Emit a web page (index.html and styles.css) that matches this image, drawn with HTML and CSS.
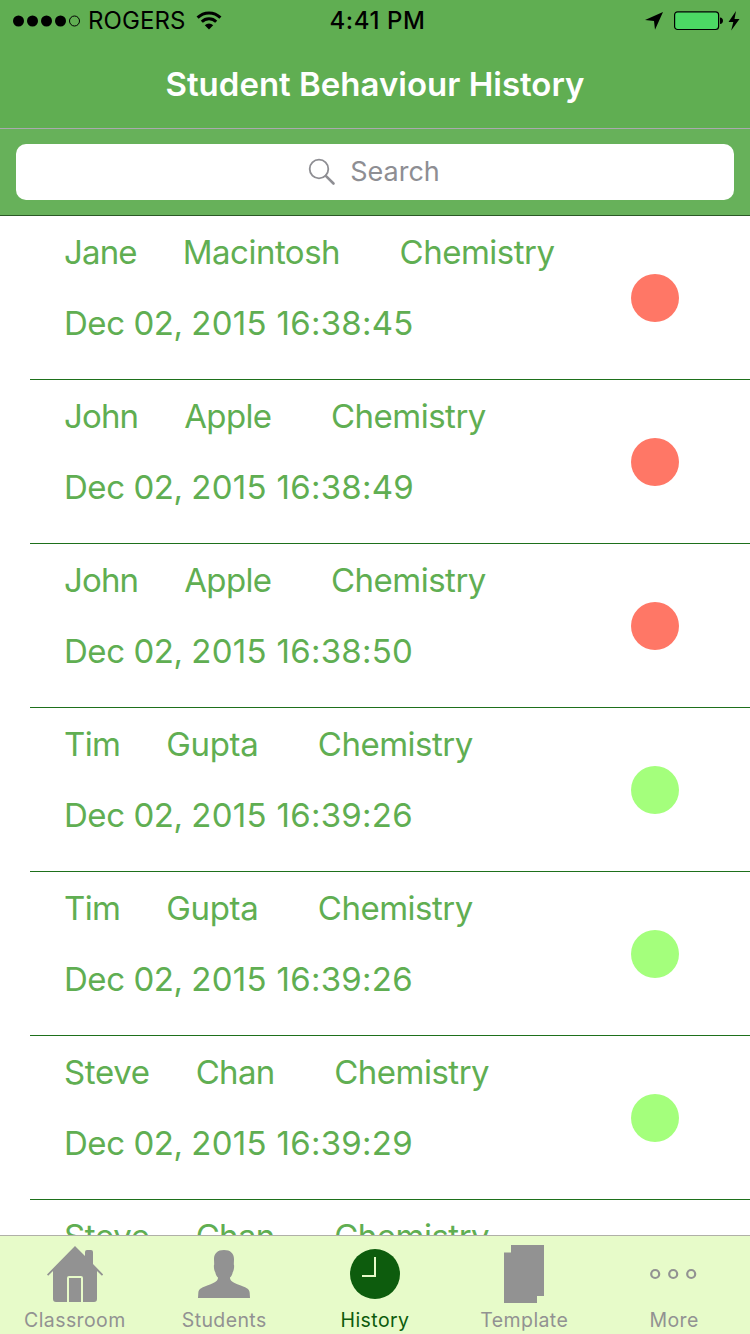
FILE: index.html
```html
<!DOCTYPE html>
<html lang="en">
<head>
<meta charset="utf-8">
<title>Student Behaviour History</title>
<link rel="stylesheet" href="styles.css">
</head>
<body>
<div class="screen">
  <header class="top">
    <div class="status">
      <div class="status-left">
        <svg class="signal" width="68" height="12" viewBox="0 0 68 12"><circle cx="5.5" cy="6" r="5.5"/><circle cx="19.5" cy="6" r="5.5"/><circle cx="33.5" cy="6" r="5.5"/><circle cx="47.5" cy="6" r="5.5"/><circle cx="61.5" cy="6" r="5" fill="none" stroke="#000"/></svg>
        <span class="carrier">ROGERS</span>
        <svg class="wifi" width="26" height="19" viewBox="0 0 26 19"><g fill="none" stroke="#000" stroke-width="3"><path d="M1.6 6.6a16.2 16.2 0 0 1 22.8 0"/><path d="M5.8 10.8a10.2 10.2 0 0 1 14.4 0"/></g><path d="M13 18.500l-4.200-4.200a6 6 0 0 1 8.400 0z"/></svg>
      </div>
      <span class="time">4:41 PM</span>
      <div class="status-right">
        <svg class="location" width="18" height="18" viewBox="0 0 18 18"><path d="M18 0L10 17.800 9 9 0 8z"/></svg>
        <svg class="battery" width="50" height="20" viewBox="0 0 50 20"><rect x=".6" y=".8" width="44" height="17.700" rx="3" fill="#4cd964" stroke="#000" stroke-width="1.200"/><path d="M46 6.500c1.800 0 3 1.400 3 3.200s-1.200 3.200-3 3.200z"/></svg>
        <svg class="bolt" width="12" height="20" viewBox="0 0 12 20"><path d="M8 0L.5 11h4.800L3.200 19.500 11.500 8H6.500z"/></svg>
      </div>
    </div>
    <h1 class="title"><span>Student Behaviour History</span></h1>
  </header>
  <div class="searchbar">
    <div class="field">
      <svg class="glass" width="28" height="28" viewBox="0 0 28 28" fill="none" stroke="#8e8e93"><circle cx="11" cy="11" r="9.300" stroke-width="1.800"/><path d="M17.800 17.800l7.700 7.700" stroke-width="2.600" stroke-linecap="round"/></svg>
      <span class="placeholder">Search</span>
    </div>
  </div>
  <main class="list">
    <article class="row"><div class="info"><div class="names"><span class="first tighter">Jane</span><span class="last snug">Macintosh</span><span class="course snug">Chemistry</span></div><div class="date"><span class="day">Dec 02, </span><span class="year">2015 </span><span class="clock">16:38:45</span></div></div><i class="dot red"></i></article>
    <article class="row"><div class="info"><div class="names"><span class="first tighter">John</span><span class="last tight">Apple</span><span class="course snug">Chemistry</span></div><div class="date"><span class="day">Dec 02, </span><span class="year">2015 </span><span class="clock">16:38:49</span></div></div><i class="dot red"></i></article>
    <article class="row"><div class="info"><div class="names"><span class="first tighter">John</span><span class="last tight">Apple</span><span class="course snug">Chemistry</span></div><div class="date"><span class="day">Dec 02, </span><span class="year">2015 </span><span class="clock">16:38:50</span></div></div><i class="dot red"></i></article>
    <article class="row"><div class="info"><div class="names"><span class="first tight">Tim</span><span class="last close">Gupta</span><span class="course snug">Chemistry</span></div><div class="date"><span class="day">Dec 02, </span><span class="year">2015 </span><span class="clock">16:39:26</span></div></div><i class="dot green"></i></article>
    <article class="row"><div class="info"><div class="names"><span class="first tight">Tim</span><span class="last close">Gupta</span><span class="course snug">Chemistry</span></div><div class="date"><span class="day">Dec 02, </span><span class="year">2015 </span><span class="clock">16:39:26</span></div></div><i class="dot green"></i></article>
    <article class="row"><div class="info"><div class="names"><span class="first close">Steve</span><span class="last tight">Chan</span><span class="course snug">Chemistry</span></div><div class="date"><span class="day">Dec 02, </span><span class="year">2015 </span><span class="clock">16:39:29</span></div></div><i class="dot green"></i></article>
    <article class="row"><div class="info"><div class="names"><span class="first close">Steve</span><span class="last tight">Chan</span><span class="course snug">Chemistry</span></div></div></article>
  </main>
  <nav class="tabs">
    <a class="tab"><svg width="58" height="60" viewBox="0 0 58 60"><path d="M1 29.500L29 1l10 10V7q0-2 2-2h4q2 0 2 2v12l10.200 10.500-1.300 1.300L51 26v28q0 3-3 3H37V33q0-2-2-2H23q-2 0-2 2v24H10q-3 0-3-3V26L2.200 30.800z"/><path d="M23 33h12v24H23z"/></svg><span>Classroom</span></a>
    <a class="tab students"><svg width="54" height="60" viewBox="0 0 54 60"><path d="M27 5C20.500 5 16.800 8.500 17 14.500L17.200 19.500C16.500 20 17 25.500 18.200 27 18.800 30 19.800 31.500 21 32.500 21 36 18 37.500 13 39.500 5 42.500 1.500 43.500 1.300 48L1 53H53L52.700 48C52.500 43.500 49 42.500 41 39.500 36 37.500 33 36 33 32.500 34.200 31.500 35.200 30 35.800 27 37 25.500 37.500 20 36.800 19.500L37 14.500C37.200 8.500 33.500 5 27 5z"/></svg><span>Students</span></a>
    <a class="tab history active"><svg width="50" height="60" viewBox="0 0 50 60"><circle cx="25" cy="29" r="25"/><path d="M25 12v19H12" fill="none" stroke="#e7fbc9" stroke-width="2"/></svg><span>History</span></a>
    <a class="tab"><svg width="40" height="60" viewBox="0 0 40 60"><path d="M7 0h33v51h-7v7H0V7.500h7z"/></svg><span>Template</span></a>
    <a class="tab"><svg width="46" height="60" viewBox="0 0 46 60"><g fill="none" stroke="#929292" stroke-width="2.200"><circle cx="4.200" cy="29" r="4"/><circle cx="22.200" cy="29" r="4"/><circle cx="40.200" cy="29" r="4"/></g></svg><span>More</span></a>
  </nav>
</div>
</body>
</html>
```
FILE: styles.css
```css
* { box-sizing: border-box; }
body { margin: 0; font-family: Inter, "Liberation Sans", sans-serif; background: #fff; }
svg { display: block; flex: none; overflow: visible; }
.screen { width: 750px; height: 1334px; display: flex; flex-direction: column; overflow: hidden; background: #fff; }

.top { height: 129px; background: #60ae52; border-bottom: 1px solid #aaaaae; }
.status { height: 40px; display: grid; grid-template-columns: 1fr auto 1fr; align-items: center; padding: 0 10px 0 13px; font-size: 24px; line-height: 40px; }
.status-left, .status-right { display: flex; align-items: center; }
.status-right { justify-content: flex-end; }
.carrier { margin: 1px 0 0 7px; letter-spacing: 0.1px; }
.wifi { margin-left: 10px; }
.time { margin: 1px 0 0 2px; font-weight: 550; letter-spacing: 0.6px; }
.battery { margin-left: 11px; }
.bolt { margin-left: 4px; }
.title { margin: 0; height: 88px; line-height: 88px; text-align: center; color: #fff; font-size: 33px; font-weight: 600; }

.searchbar { height: 87px; padding: 15px 16px; background: #67b15a; border-bottom: 1px solid #2b5926; }
.field { height: 56px; padding-right: 2px; display: flex; align-items: center; justify-content: center; background: #fff; border-radius: 10px; }
.placeholder { margin-left: 14px; color: #8e8e93; font-size: 27px; line-height: 56px; }

.list { flex: 1; min-height: 0; overflow: hidden; color: #60ae52; font-size: 33px; }
.row { height: 164px; margin-left: 30px; padding: 0 71px 0 34px; display: flex; align-items: center; justify-content: space-between; border-bottom: 1px solid #1e701b; }
.info { height: 163px; }
.names { display: flex; line-height: 72px; }
.last { margin-left: 46px; }
.course { margin-left: 59.5px; }
.close { letter-spacing: -0.35px; }
.snug { letter-spacing: -0.5px; }
.tight { letter-spacing: -0.65px; }
.tighter { letter-spacing: -0.85px; }
.date { line-height: 70px; white-space: pre; }
.day { letter-spacing: -0.45px; }
.year { letter-spacing: 0.3px; }
.clock { letter-spacing: 0.25px; }
.dot { width: 48px; height: 48px; border-radius: 50%; }
.red { background: #ff7766; }
.green { background: #a4ff7c; }

.tabs { height: 99px; padding-right: 1px; display: grid; grid-template-columns: repeat(5, 1fr); background: #e7fbc9; border-top: 1px solid #b0b0a8; }
.tab { display: flex; flex-direction: column; align-items: center; padding-top: 9px; color: #929292; fill: #929292; font-size: 19.5px; line-height: 31px; letter-spacing: 0.4px; }
.active { color: #0d5c0d; fill: #0d5c0d; }
.students { padding-right: 1px; }
.history { padding-left: 1px; }
```
